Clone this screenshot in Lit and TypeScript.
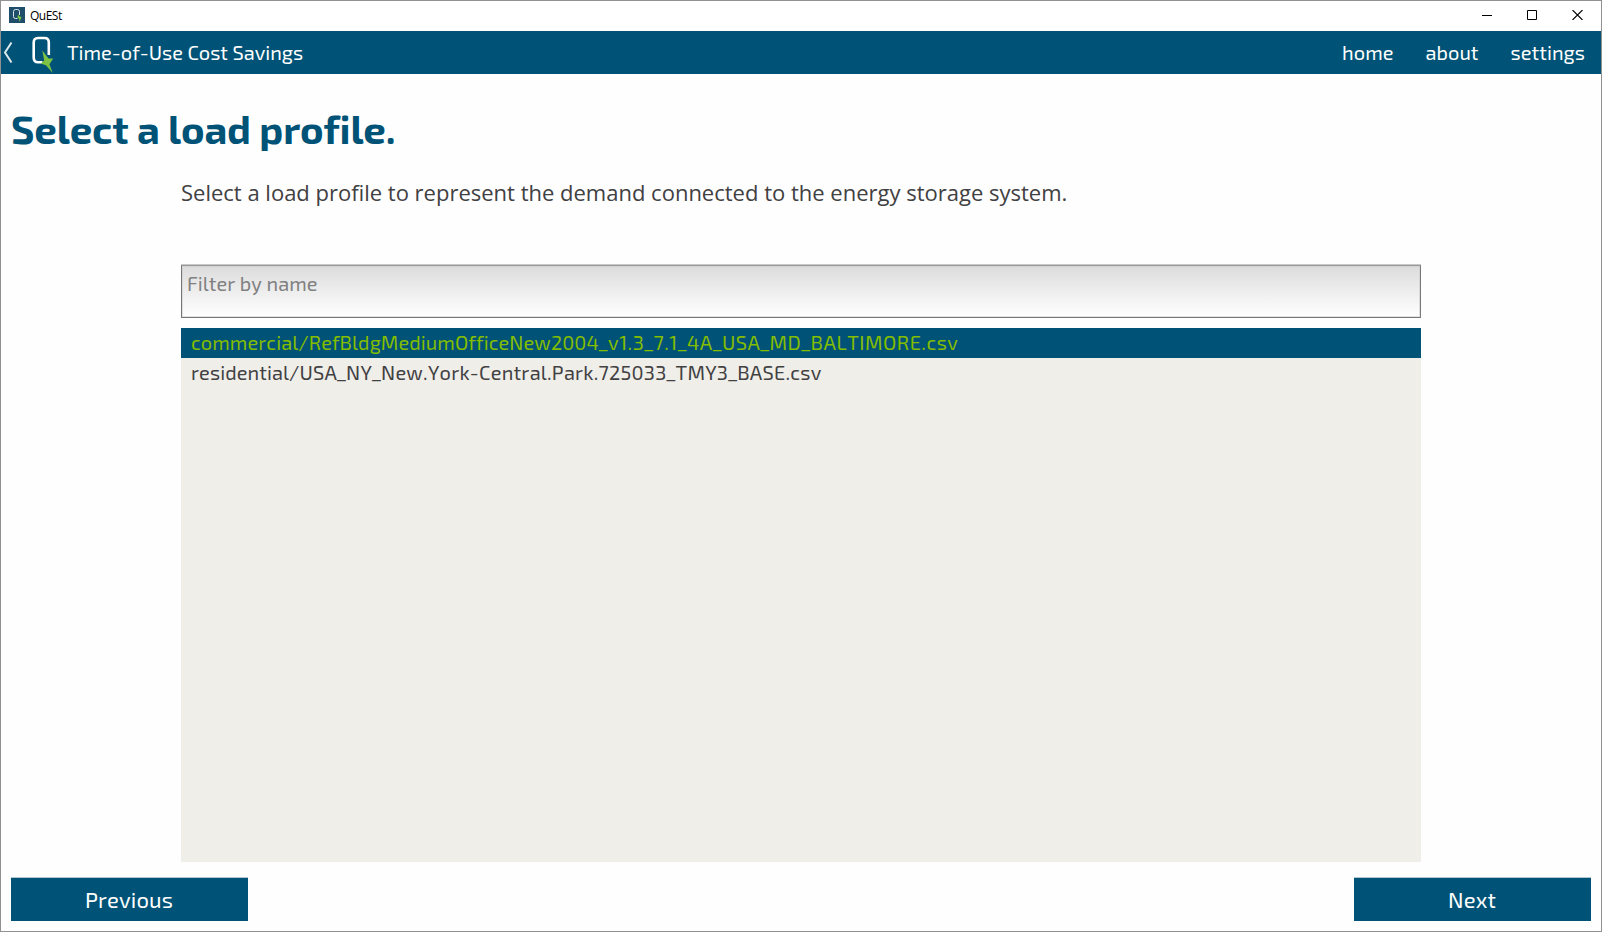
import { LitElement, html, css } from "lit";

class AppRoot extends LitElement {
  static properties = { selected: { type: Number } };

  static styles = css`
    :host {
      display: block;
      font-family: "Exo 2", "Open Sans", sans-serif;
      font-kerning: none;
      font-variant-ligatures: none;
      color: #414042;
    }
    * { box-sizing: border-box; }
    svg { display: block; }
    .window {
      height: 932px;
      border: 1px solid #919191;
      background: #fefefe;
      display: flex;
      flex-direction: column;
    }
    .titlebar {
      height: 30px;
      flex: none;
      background: #fff;
      display: flex;
      align-items: center;
      padding: 0 18px 2px 8px;
      color: #000;
    }
    .app-name {
      font: 12px/16px "Open Sans", sans-serif;
      letter-spacing: -0.5px;
      margin-left: 5px;
      padding-top: 2px;
      flex: 1;
    }
    .controls { display: flex; gap: 35px; }
    .header {
      height: 43px;
      flex: none;
      background: #005376;
      color: #fff;
      display: flex;
      align-items: center;
      padding-right: 16px;
      font-size: 20px;
      line-height: 24px;
    }
    .logo { margin: 4px 0 0 17px; }
    .title { flex: 1; margin-left: 13px; padding-bottom: 2px; }
    nav { display: flex; gap: 32px; padding-bottom: 2px; letter-spacing: 0.05px; }
    h1 {
      margin: 30px 0 2px 10px;
      font-size: 40px;
      line-height: 48px;
      font-weight: 700;
      letter-spacing: -0.16px;
      color: #005376;
    }
    .content {
      width: 1240px;
      margin: 23px 0 0 180px;
      display: flex;
      flex-direction: column;
    }
    .description {
      font: 22px/30px "Open Sans", sans-serif;
      height: 88px;
    }
    .filter {
      height: 53px;
      border: 1px solid #777;
      border-top-color: #999;
      box-shadow: inset 0 0 0 1px rgba(205, 205, 205, 0.6), 0 -1px 0 #c8c8c8;
      background: linear-gradient(#dcdcdc, #ffffff);
      padding: 5px;
      font-size: 20px;
      line-height: 24px;
      letter-spacing: 0.05px;
      color: #808080;
    }
    .list {
      margin-top: 10px;
      height: 534px;
      background: #efeee9;
      font-size: 20px;
      line-height: 28px;
      letter-spacing: 0.07px;
    }
    .row { height: 30px; padding-left: 10px; }
    .row.selected { background: #005376; color: #84bd00; }
    .variant { letter-spacing: 0.24px; }
    .selected .variant { letter-spacing: 0.48px; }
    .actions {
      margin-top: auto;
      padding: 0 10px 10px;
      display: flex;
      justify-content: space-between;
    }
    .button {
      width: 237px;
      height: 44px;
      border-top: 1px solid #b0c6d2;
      background: #005376;
      color: #fff;
      text-align: center;
      font-size: 22px;
      line-height: 42px;
      letter-spacing: 0.15px;
      padding-right: 1px;
    }
  `;

  selected = 0;

  files = [
    ["commercial/RefBldgMediumOfficeNew2004", "_v1.3_7.1_4A_USA_MD_BALTIMORE.csv"],
    ["residential/", "USA_NY_New.York-Central.Park.725033_TMY3_BASE.csv"],
  ];

  render() {
    return html`
      <div class="window">
        <div class="titlebar">
          <svg width="16" height="16" viewBox="0 0 16 16">
            <rect width="16" height="16" fill="#1f4e6b" />
            <path d="M8.5 11.5H6.5Q4.5 11.500 4.500 9.500V4.500Q4.500 2.500 6.500 2.500H8.500Q10.500 2.500 10.500 4.500V8" fill="none" stroke="#dce6ec" />
            <path d="M9 7.500L10.500 9.500L12.500 10L10.500 15L10 11.500L8.500 11Z" fill="#7ac943" />
          </svg>
          <span class="app-name">QuESt</span>
          <div class="controls">
            <svg width="10" height="10" viewBox="0 0 10 10"><path d="M0 5.500H10" stroke="#000" /></svg>
            <svg width="10" height="10" viewBox="0 0 10 10"><path d="M.5.5h9v9h-9Z" fill="none" stroke="#000" /></svg>
            <svg width="11" height="10" viewBox="0 0 11 10"><path d="M.5 0L10.500 10M10.500 0L.5 10" stroke="#000" stroke-width="1.100" /></svg>
          </div>
        </div>
        <div class="header">
          <svg width="14" height="24" viewBox="0 0 14 24">
            <path d="M10.500 1.500L4 11.500L10.500 21.500" fill="none" stroke="#dfe9ee" stroke-width="2" />
          </svg>
          <svg class="logo" width="22" height="37" viewBox="0 0 22 37">
            <path d="M10.500 26.300H6Q1.700 26.300 1.700 21.500V6.500Q1.700 2 6 2H12.500Q16.800 2 16.800 6.500V19" fill="none" stroke="#fff" stroke-width="2.600" />
            <path d="M10.300 14.600L16.500 22.600L21.200 22.400L17.400 28.200L20.800 37L13.900 29.200L8.600 27.500L12.200 24.500Z" fill="#7dc242" />
          </svg>
          <span class="title">Time-of-Use Cost Savings</span>
          <nav><span>home</span><span>about</span><span>settings</span></nav>
        </div>
        <h1>Select a load profile.</h1>
        <div class="content">
          <div class="description">Select a load profile to represent the demand connected to the energy storage system.</div>
          <div class="filter">Filter by name</div>
          <div class="list">
            ${this.files.map(
              ([stem, variant], i) =>
                html`<div class="row ${i === this.selected ? "selected" : ""}">${stem}<span class="variant">${variant}</span></div>`
            )}
          </div>
        </div>
        <div class="actions">
          <div class="button">Previous</div>
          <div class="button">Next</div>
        </div>
      </div>
    `;
  }
}
customElements.define("app-root", AppRoot);
